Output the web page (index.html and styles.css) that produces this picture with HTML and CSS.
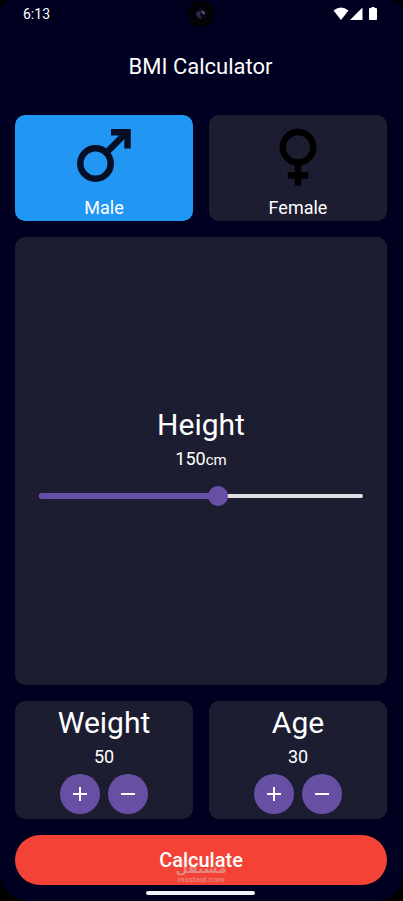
FILE: index.html
```html
<!DOCTYPE html>
<html lang="en">
<head>
<meta charset="utf-8">
<meta name="viewport" content="width=device-width, initial-scale=1">
<title>BMI Calculator</title>
<link rel="stylesheet" href="styles.css">
</head>
<body>
<div class="screen">
  <header class="status">
    <span class="time">6:13</span>
    <svg class="camera" viewBox="0 0 28 28" aria-hidden="true">
      <circle cx="14" cy="14" r="13.5" fill="#020205"/>
      <circle cx="14" cy="14" r="10" fill="none" stroke="#101024" stroke-width="1" stroke-dasharray="1 3"/>
      <circle cx="14" cy="14" r="6" fill="#080814"/>
      <path d="M9 13q1 5 6 6l-2-4 1-3-3-1z" fill="#2a2a4c"/>
      <path d="M14 10l4 2-1 3-2-2z" fill="#55557a"/>
    </svg>
    <svg class="signals" viewBox="0 0 46 14" aria-hidden="true" fill="#fff">
      <path d="M0.500 3.500Q8-2.500 15.500 3.500L8 13z"/>
      <path d="M17 13L29.500 0.500V13z"/>
      <path d="M38.500 0h3v1h1.500q1 0 1 1v10q0 1-1 1h-6q-1 0-1-1V2q0-1 1-1h1.500z"/>
    </svg>
  </header>
  <h1 class="title">BMI Calculator</h1>
  <main class="content">
    <div class="pair">
      <button class="card gender selected" type="button" aria-pressed="true">
        <svg class="symbol" viewBox="0 0 60 60" aria-hidden="true" fill="none" stroke="#060f26" stroke-width="6.500">
          <circle cx="21.500" cy="36.500" r="15.200"/>
          <path d="M32 26L52 6"/>
          <path d="M37 5.200H53.500V21.500"/>
        </svg>
        <span>Male</span>
      </button>
      <button class="card gender" type="button" aria-pressed="false">
        <svg class="symbol" viewBox="0 0 60 60" aria-hidden="true" fill="none" stroke="#000" stroke-width="6.500">
          <circle cx="30" cy="20.300" r="15.200"/>
          <path d="M30 35V58.500M19.700 48.500H40.300"/>
        </svg>
        <span>Female</span>
      </button>
    </div>
    <section class="card height">
      <label class="heading" for="height">Height</label>
      <output class="value" for="height">150<small>cm</small></output>
      <div class="slider">
        <span class="track"></span>
        <span class="fill"></span>
        <input id="height" type="range" min="0" max="270" value="150">
      </div>
    </section>
    <div class="pair">
      <section class="card counter">
        <h2 class="heading">Weight</h2>
        <output class="value">50</output>
        <div class="steps">
          <button class="step" type="button" aria-label="Increase weight"><svg viewBox="0 0 24 24"><path d="M5 12H19M12 5V19"/></svg></button>
          <button class="step" type="button" aria-label="Decrease weight"><svg viewBox="0 0 24 24"><path d="M5 12H19"/></svg></button>
        </div>
      </section>
      <section class="card counter">
        <h2 class="heading">Age</h2>
        <output class="value">30</output>
        <div class="steps">
          <button class="step" type="button" aria-label="Increase age"><svg viewBox="0 0 24 24"><path d="M5 12H19M12 5V19"/></svg></button>
          <button class="step" type="button" aria-label="Decrease age"><svg viewBox="0 0 24 24"><path d="M5 12H19"/></svg></button>
        </div>
      </section>
    </div>
    <div class="action">
      <button class="calculate" type="button">Calculate</button>
      <div class="watermark"><span class="brand" lang="ar" dir="rtl">مستقل</span><span class="domain">mostaql.com</span></div>
    </div>
  </main>
  <div class="home"></div>
</div>
</body>
</html>
```
FILE: styles.css
```css
* {
  box-sizing: border-box;
}

body {
  margin: 0;
  background: #000;
  color: #fff;
  font-family: Roboto, "Liberation Sans", sans-serif;
}

button {
  border: 0;
  padding: 0;
  color: inherit;
  font: inherit;
}

.screen {
  display: flex;
  flex-direction: column;
  min-height: 100vh;
  padding-right: 2px;
  background: #000020;
  border-radius: 12px 12px 28px 28px;
}

.status {
  display: grid;
  grid-template-columns: 1fr 28px 1fr;
  align-items: center;
  height: 28px;
  padding: 0 22px 0 23px;
}

.time {
  font-size: 14px;
}

.camera {
  width: 28px;
  height: 28px;
}

.signals {
  width: 46px;
  height: 14px;
  justify-self: end;
}

.title {
  margin: 24px 0 34px;
  font-size: 22px;
  font-weight: 400;
  line-height: 29px;
  text-align: center;
}

.content {
  display: flex;
  flex: 1;
  flex-direction: column;
  gap: 16px;
  padding: 0 14px 0 15px;
}

.pair {
  display: grid;
  grid-template-columns: 1fr 1fr;
  gap: 16px;
}

.card {
  display: flex;
  flex-direction: column;
  align-items: center;
  border-radius: 10px;
  background: #1d1d31;
}

.gender {
  height: 106px;
  padding-top: 12px;
  gap: 9px;
  font-size: 18px;
  line-height: 24px;
}

.selected {
  background: #2196f3;
}

.symbol {
  width: 60px;
  height: 60px;
}

.height {
  flex: 1;
  justify-content: center;
  padding: 0 24px;
}

.heading {
  margin: 0;
  font-size: 30px;
  font-weight: 400;
  line-height: 44px;
}

.value {
  font-size: 18px;
  line-height: 24px;
}

.value small {
  font-size: 15px;
}

.slider {
  display: grid;
  align-items: center;
  width: 100%;
  height: 48px;
}

.slider > * {
  grid-area: 1 / 1;
}

.track {
  height: 4px;
  border-radius: 2px;
  background: #e2dfe6;
}

.fill {
  width: 55%;
  height: 6px;
  border-radius: 3px;
  background: #6750a4;
}

.slider input {
  width: 100%;
  height: 20px;
  margin: 0;
  appearance: none;
  background: transparent;
}

.slider input::-webkit-slider-thumb {
  width: 20px;
  height: 20px;
  appearance: none;
  border-radius: 50%;
  background: #6750a4;
}

.counter {
  height: 118px;
}

.steps {
  display: flex;
  gap: 8px;
  margin-top: 5px;
}

.step {
  display: grid;
  place-items: center;
  width: 40px;
  height: 40px;
  border-radius: 50%;
  background: #6750a4;
}

.step svg {
  width: 24px;
  height: 24px;
  fill: none;
  stroke: #fff;
  stroke-width: 2;
}

.action {
  position: relative;
}

.calculate {
  width: 100%;
  height: 50px;
  border-radius: 25px;
  background: #f44336;
  font-size: 20px;
  font-weight: 500;
}

.watermark {
  position: absolute;
  right: 0;
  bottom: 1px;
  left: 0;
  display: flex;
  flex-direction: column;
  align-items: center;
  color: rgba(215, 205, 205, 0.5);
  pointer-events: none;
}

.brand {
  font-family: "DejaVu Sans", sans-serif;
  font-size: 14px;
  font-weight: 700;
  line-height: 13px;
}

.domain {
  font-size: 8px;
  font-weight: 500;
  line-height: 9px;
}

.home {
  width: 109px;
  height: 4px;
  margin: 6px auto;
  border-radius: 2px;
  background: #f2f2f4;
}
```
